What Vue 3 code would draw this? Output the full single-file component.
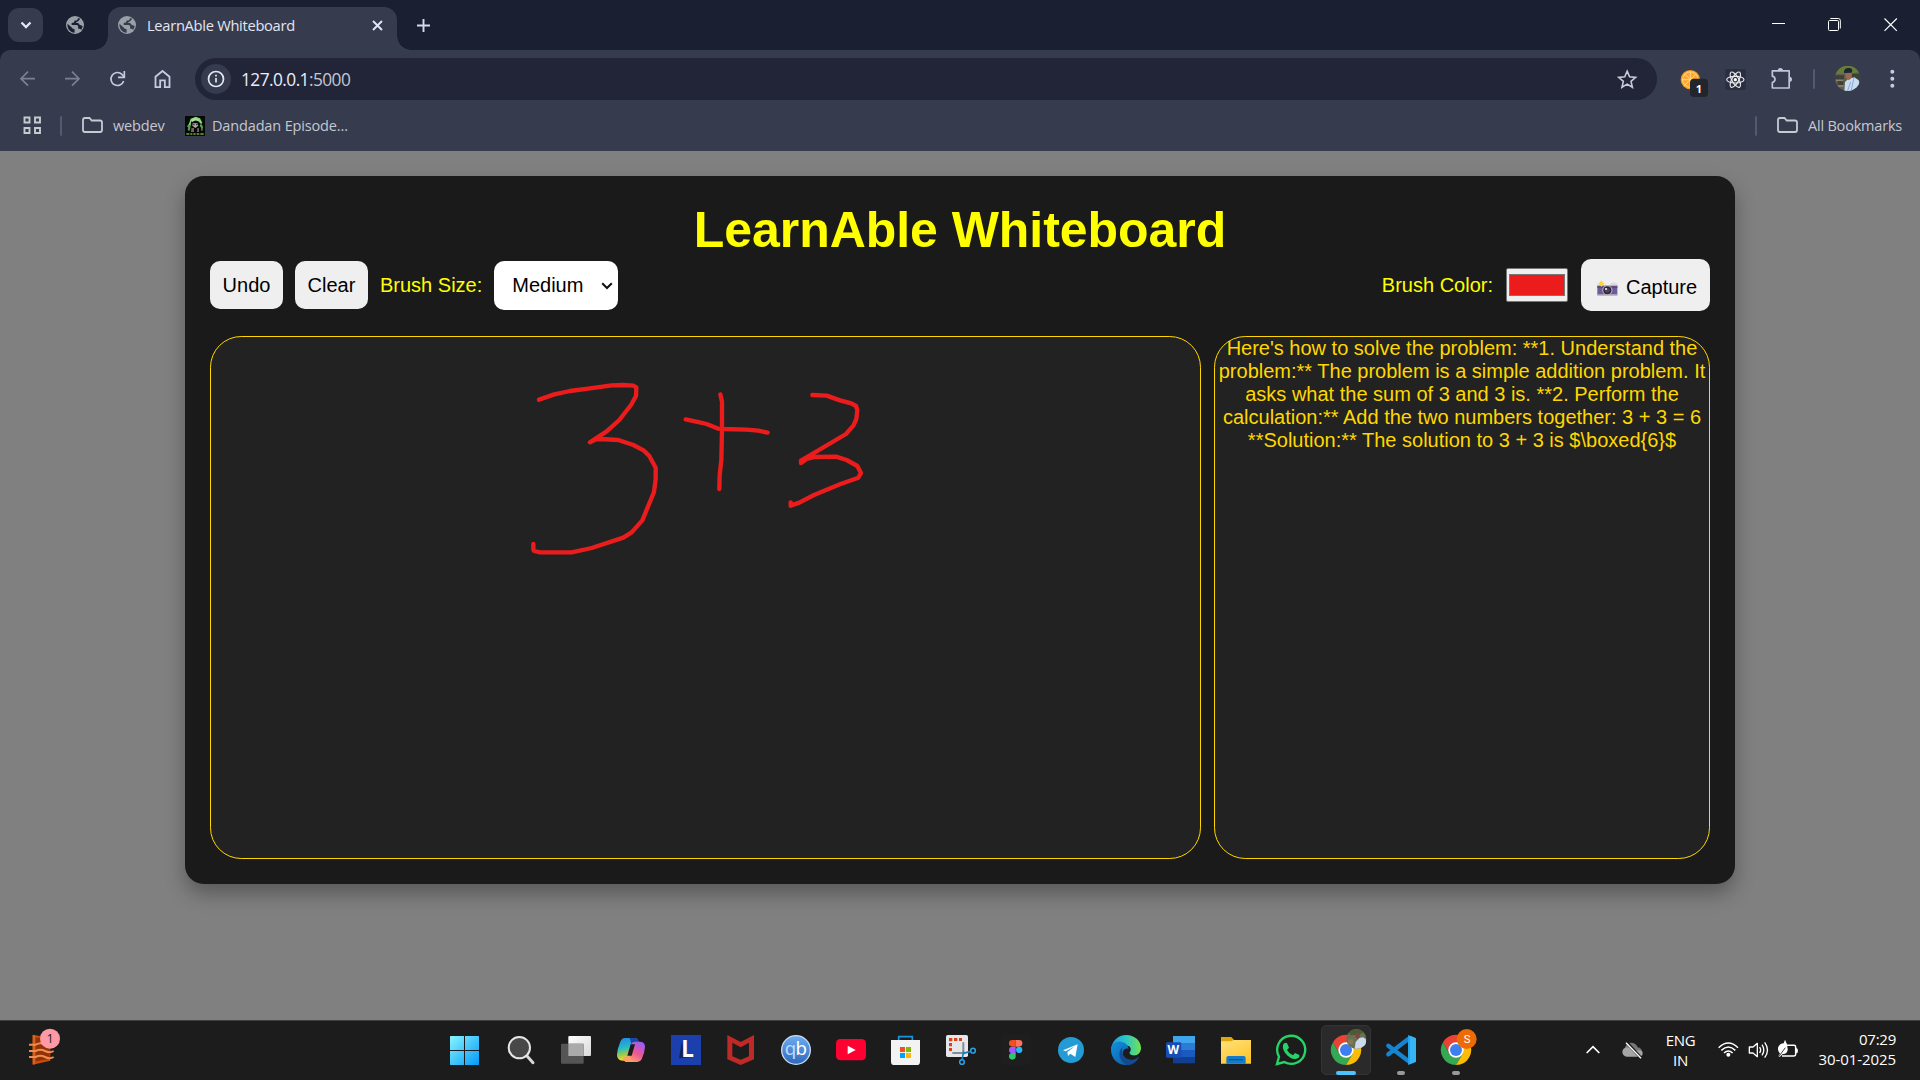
<script setup>
import { ref } from 'vue'

const brushSizes = ['Small', 'Medium', 'Large']
const brushSize = ref('Medium')
const solution =
  "Here's how to solve the problem: **1. Understand the problem:** The problem is a simple addition problem. It asks what the sum of 3 and 3 is. **2. Perform the calculation:** Add the two numbers together: 3 + 3 = 6 **Solution:** The solution to 3 + 3 is $\\boxed{6}$"
const strokes = [
  '87,119 133,103 180,93 240,85 305,76 340,75 370,77 379,82 378,108 363,135 328,180 290,214 240,247 258,238 272,237 325,240 370,255 402,272 418,288 437,323 437,357 432,396 397,481 365,517 340,533 245,564 185,577 90,577 72,573 70,568 70,552',
  '631,103 636,125 636,208 634,300 629,345 628,387',
  '527,178 555,184 590,192 625,206 640,207 710,209 745,212 773,218',
  '907,105 950,107 990,121 1024,130 1038,138 1042,150 1039,177 1030,197 1008,222 873,302 873,309 890,297 915,291 978,290 1010,300 1042,318 1053,339 1045,353 990,373 912,405 868,428 842,437 842,427',
]
</script>

<template>
  <div class="screen">
    <header class="tabstrip">
      <button class="tab-search">
        <svg viewBox="0 0 35 34"><path d="M13.500 14.500l4.500 4.500 4.500-4.500" fill="none" stroke="#e3e5f2" stroke-width="2.300" /></svg>
      </button>
      <div class="pinned">
        <svg class="globe" viewBox="0 0 24 24"><circle cx="12" cy="12" r="10.800" fill="#9aa0a6" /><path d="M3 10.500l5 4.500q1 2 3.500 2v4.300C6 21 2.500 16.500 3 10.500zM15.500 3.500c0 2-1 3.200-3 3.200h-1q0 3-3.500 3v2.200h6q1.800 0 1.800 2v2.500h1.500q1.400 0 2 1.500l2-4q-1-2-3.500-2l-2-2.400h-3l3.500-2.700 2-2.300z" fill="#1a1f31" /></svg>
      </div>
      <div class="tab">
        <svg class="globe" viewBox="0 0 24 24"><circle cx="12" cy="12" r="10.800" fill="#9aa0a6" /><path d="M3 10.500l5 4.500q1 2 3.500 2v4.300C6 21 2.500 16.500 3 10.500zM15.500 3.500c0 2-1 3.200-3 3.200h-1q0 3-3.500 3v2.200h6q1.800 0 1.800 2v2.500h1.500q1.400 0 2 1.500l2-4q-1-2-3.500-2l-2-2.400h-3l3.500-2.700 2-2.300z" fill="#363b4d" /></svg>
        <span class="tab-title">LearnAble Whiteboard</span>
        <svg class="tab-close" viewBox="0 0 11 11"><path d="M1 1l9 9M10 1l-9 9" stroke="#e3e5f2" stroke-width="1.900" /></svg>
      </div>
      <svg class="new-tab" viewBox="0 0 13 13"><path d="M6.500 0v13M0 6.500h13" stroke="#d8daec" stroke-width="1.900" /></svg>
      <div class="window-controls">
        <svg viewBox="582 3 141 141"><path d="M633 70.500h39" stroke="#fff" stroke-width="3" /></svg>
        <svg viewBox="750 3 141 141"><g fill="none" stroke="#fff" stroke-width="3"><rect x="802.500" y="61.500" width="30" height="30" rx="3" /><path d="M808 55.500h24q6 0 6 6v24" /></g></svg>
        <svg viewBox="923 3 141 141"><path d="M975.500 55.500l37 37M1012.500 55.500l-37 37" stroke="#fff" stroke-width="3.500" /></svg>
      </div>
    </header>

    <div class="browser-bars">
      <div class="toolbar">
        <svg class="tool" viewBox="15 174 135 126"><path d="M105 236H64M84 215l-21 21 21 21" fill="none" stroke="#7d8092" stroke-width="5" /></svg>
        <svg class="tool" viewBox="150 174 135 126"><path d="M195 236h41M216 215l21 21-21 21" fill="none" stroke="#7d8092" stroke-width="5" /></svg>
        <svg class="tool" viewBox="285 174 135 126"><path d="M371 243a19.500 19.500 0 1 1-5-20l7 8" fill="none" stroke="#c7cae0" stroke-width="5" /><path d="M373 213v19h-19" fill="none" stroke="#c7cae0" stroke-width="5" /></svg>
        <svg class="tool" viewBox="420 174 135 126"><path d="M466.500 261.500V230l21-17 21 17v31.500h-14V241h-14v20.500z" fill="none" stroke="#c7cae0" stroke-width="5.500" /></svg>
        <div class="omnibox">
          <svg class="info" viewBox="0 0 30 30"><circle cx="15" cy="15" r="15" fill="#373b4e" /><circle cx="15" cy="15" r="7.500" fill="none" stroke="#e3e5f2" stroke-width="1.700" /><path d="M15 14v4.500M15 10.700v1.800" stroke="#e3e5f2" stroke-width="1.700" /></svg>
          <span class="url">127.0.0.1<span class="port">:5000</span></span>
          <svg class="star" viewBox="172 207 60 60"><path d="M202.500 213.500l7.300 17 18 1.500-13.800 12 4.200 17.700-15.700-9.500-15.700 9.500 4.200-17.700-13.800-12 18-1.500z" fill="none" stroke="#c7cad6" stroke-width="4.800" /></svg>
        </div>
        <div class="extensions">
          <svg class="tool" viewBox="330 174 135 126">
            <circle cx="391" cy="239" r="29" fill="#f79a1c" /><circle cx="391" cy="239" r="25" fill="#ffd27a" /><circle cx="391" cy="239" r="22" fill="#ffa733" />
            <path d="M391 216v46M368 239h46M375 223l32 32M407 223l-32 32" stroke="#ffe0a0" stroke-width="2.500" />
            <rect x="390" y="236" width="54" height="55" rx="12" fill="#22252c" />
            <text x="417" y="280" text-anchor="middle" class="badge-number">1</text>
          </svg>
          <svg class="tool" viewBox="465 174 135 126"><rect x="496" y="207" width="61" height="62" rx="4" fill="#2a2e3e" /><g fill="none" stroke="#e8e8ea" stroke-width="3.500"><ellipse cx="526" cy="239" rx="26" ry="10" /><ellipse cx="526" cy="239" rx="26" ry="10" transform="rotate(60 526 239)" /><ellipse cx="526" cy="239" rx="26" ry="10" transform="rotate(120 526 239)" /></g><circle cx="526" cy="239" r="5" fill="#fff" /></svg>
          <svg class="tool" viewBox="600 174 135 126"><path d="M637 212.500h50.500V264H637v-16.500q8-2 8-9.500t-8-9.500z" fill="none" stroke="#c2c5dc" stroke-width="5" stroke-linejoin="round" /><path fill="#c2c5dc" d="M653 212q0-8 8-8t8 8zM688 230q8 0 8 8t-8 8z" /></svg>
          <i class="divider"></i>
          <svg class="tool" viewBox="795 174 135 126"><defs><clipPath id="face"><circle cx="863" cy="235" r="38" /></clipPath></defs><g clip-path="url(#face)"><path fill="#625e52" d="M824 197h77v77h-77z" /><path fill="#667d35" d="M824 197h77v19l-24 4-53 2z" /><path fill="#3c4138" d="M824 226h28v12h-28zM833 244h17v11h-17zM876 221h24v22h-24z" /><path fill="#89806e" d="M828 239h21v4h-21zM834 255h17v5h-17z" /><path d="M853 275l2-29 10-9 18-5 13 9 6 34z" fill="#c9ddf3" /><path d="M882 233l-9 41M872 246l-10 29" stroke="#8ba8cf" stroke-width="3" /><path fill="#9b6952" d="M857 211h18v22l-8 8-10-8z" /><path fill="#192637" d="M852 214q2-12 17-10 8 1 8 8l-2 6-23 1z" /></g></svg>
          <svg class="tool" viewBox="930 174 135 126"><g fill="#c7cae0"><circle cx="997" cy="215" r="6" /><circle cx="997" cy="236" r="6" /><circle cx="997" cy="257" r="6" /></g></svg>
        </div>
      </div>
      <div class="bookmarks">
        <svg class="grid-icon" viewBox="0 0 19 19"><path d="M1.500 1.500h5v5h-5zM12 1.500h5v5h-5zM1.500 12h5v5h-5zM12 12h5v5h-5z" fill="none" stroke="#c8cad2" stroke-width="1.900" /></svg>
        <i class="divider"></i>
        <svg class="folder" viewBox="0 0 21 17"><path d="M1 3q0-2 2-2h4.500l2.200 2.500H18q2 0 2 2V13q0 2-2 2H3q-2 0-2-2z" fill="none" stroke="#c8cad2" stroke-width="1.800" /></svg>
        <span class="mark webdev">webdev</span>
        <svg class="anime" viewBox="555 348 60 60"><path fill="#050a07" d="M555 348h60v60h-60z" /><path fill="#87db74" d="M566 374l6-18 15-6 13 5 7 13-4 4-8-8-14-4-8 6-1 12z" /><path fill="#5ba450" d="M566 372l6 8-4 14-5-5 2-6-4-4zM603 370l6 10-2 13-4-2 1-7-5-6z" /><path fill="#b7d6af" d="M575 361l6-6 12 1 4 7-9-3-11 6z" /><path fill="#b9aea2" d="M578 370h14l3 7-9 7-9-7z" /><path fill="#171c20" d="M579 373h5v3h-5zM588 373h5v3h-5z" /><path fill="#776061" d="M574 384h8v12h-9zM592 384h5v12h-6z" /><path d="M559 402h9M571 402h6M580 402h7M590 402h8M601 402h10" stroke="#7ba536" stroke-width="4" /></svg>
        <span class="mark episode">Dandadan Episode...</span>
        <span class="spacer"></span>
        <i class="divider"></i>
        <svg class="folder all" viewBox="0 0 21 17"><path d="M1 3q0-2 2-2h4.500l2.200 2.500H18q2 0 2 2V13q0 2-2 2H3q-2 0-2-2z" fill="none" stroke="#c8cad2" stroke-width="1.800" /></svg>
        <span class="mark all-label">All Bookmarks</span>
      </div>
    </div>

    <main class="page">
      <section class="card">
        <h1>LearnAble Whiteboard</h1>
        <div class="controls">
          <div class="group">
            <button class="btn">Undo</button>
            <button class="btn">Clear</button>
            <label>Brush Size:</label>
            <div class="select-wrap">
              <select v-model="brushSize"><option v-for="size in brushSizes" :key="size">{{ size }}</option></select>
              <svg viewBox="0 0 12 8"><path d="M1.200 1.200L6 6l4.800-4.800" fill="none" stroke="#111" stroke-width="2" /></svg>
            </div>
          </div>
          <div class="group right">
            <label>Brush Color:</label>
            <button class="color"><i></i></button>
            <button class="btn capture">
              <svg viewBox="710 121 63 48"><path fill="#ded9d4" d="M747 138l4-7q7-5 18-1l2 8z" /><path fill="#6a5d99" d="M711 136h60v31h-60z" /><path fill="#584982" d="M711 140h60v5h-60z" /><path fill="#b9b1ca" d="M711 136h60v3h-60zM711 164h60v3h-60z" /><circle cx="741" cy="152" r="15" fill="#bcb6b9" /><circle cx="741" cy="152" r="12" fill="#302838" /><circle cx="741" cy="152" r="7" fill="#51406d" /><circle cx="737" cy="148" r="3" fill="#fff" /><path fill="#ffd52d" d="M723 122l4 6 7 4-7 4-4 6-4-6-7-4 7-4z" /></svg>
              <span>Capture</span>
            </button>
          </div>
        </div>
        <div class="panels">
          <div class="panel board">
            <svg viewBox="211 337 989 521">
              <g transform="translate(510 360) scale(.333333)" fill="none" stroke="#ed1c1c" stroke-width="13" stroke-linecap="round" stroke-linejoin="round">
                <polyline v-for="points in strokes" :key="points" :points="points" />
              </g>
            </svg>
          </div>
          <div class="panel answer">{{ solution }}</div>
        </div>
      </section>
    </main>

    <footer class="taskbar">
      <div class="widget">
        <svg viewBox="84 52 99 117"><path fill="#c94d0b" d="M98 75l53 10v68l-53 12z" /><path fill="#8f3207" d="M107 84h42v64l-42 7z" /><path d="M101.500 76v88" stroke="#da6118" stroke-width="7" /><g fill="none" stroke="#f18c4d" stroke-width="6"><path d="M87 105h20q13-8 27-2h27" /><path d="M87 124h20q14-7 28 0t26 0" /><path d="M87 142h20q14-7 28 0t26 0" /></g><circle cx="150" cy="87" r="30" fill="#ff99a4" /><text x="150" y="101" text-anchor="middle" class="widget-number">1</text></svg>
      </div>
      <nav class="apps">
        <div class="app"><svg viewBox="63 60 90 90"><defs><linearGradient id="win" x1="60" y1="63" x2="147" y2="150" gradientUnits="userSpaceOnUse"><stop stop-color="#87f5ff" /><stop offset="1" stop-color="#0499f8" /></linearGradient></defs><path fill="url(#win)" d="M62 63h40v42H60V65q0-2 2-2zM105 63h40q2 0 2 2v40h-42zM60 108h42v42H62q-2 0-2-2zM105 108h42v40q0 2-2 2h-40z" /></svg></div>
        <div class="app"><svg viewBox="228 60 90 90"><path d="M289 121l20 22" stroke="#d5dade" stroke-width="9" stroke-linecap="round" /><circle cx="268" cy="98" r="32" fill="#484848" stroke="#e4e6e9" stroke-width="6" /></svg></div>
        <div class="app"><svg viewBox="393 60 90 90"><defs><linearGradient id="pane" x2="1" y2="1"><stop stop-color="#fff" /><stop offset="1" stop-color="#d9d9d9" /></linearGradient></defs><rect x="415" y="63" width="68" height="60" rx="3" fill="url(#pane)" /><rect x="393" y="86" width="68" height="60" rx="3" fill="#555" /><path d="M415 86h46v37h-46z" fill="#ababab" /></svg></div>
        <div class="app"><svg viewBox="558 60 90 90"><defs><linearGradient id="copA" x2=".2" y2="1"><stop stop-color="#2585e8" /><stop offset=".45" stop-color="#22b9cd" /><stop offset=".75" stop-color="#94cd4e" /><stop offset="1" stop-color="#ffd72d" /></linearGradient><linearGradient id="copB" x1=".8" x2=".2" y2="1"><stop stop-color="#9a5cff" /><stop offset=".5" stop-color="#ec5793" /><stop offset="1" stop-color="#ffae64" /></linearGradient></defs><path fill="url(#copA)" d="M583 69h31q8 0 11 9l3 9h-11q-9 0-12 9l-9 30q-4 11-14 11-22 0-21-18 1-18 10-39 5-11 12-11z" /><path fill="#1748ae" d="M599 69h15q8 0 11 9l3 9h-14q-6 0-8 7z" /><path fill="url(#copB)" d="M622 141h-31q-9 0-12-11 9-1 12-9l11-31q4-10 14-10h13q17 0 16 17-1 16-10 36-4 8-13 8z" /><path fill="#ff9f61" d="M579 130q9-1 12-9l3-9 12 29h-15q-9 0-12-11z" /><path fill="#1c1c1c" d="M602 88h13l-10 34h-13z" /></svg></div>
        <div class="app"><svg viewBox="723 60 90 90"><path fill="#1b40ae" d="M723 60h90v90h-90z" /><path fill="#13234e" d="M756 77l-9 53 42-4-28-9z" /><text x="754" y="126" class="letter-l">L</text></svg></div>
        <div class="app"><svg viewBox="888 60 90 90"><path fill="#bf2926" d="M892 60l40 21 40-21v73l-40 17-40-17zM907 83v41l25 10 25-10V83l-25 14z" fill-rule="evenodd" /></svg></div>
        <div class="app"><svg viewBox="1053 60 90 90"><defs><linearGradient id="qb" x2="0" y2="1"><stop stop-color="#6eacf2" /><stop offset="1" stop-color="#2e69ba" /></linearGradient></defs><circle cx="1098" cy="105" r="43" fill="url(#qb)" stroke="#c8ddf2" stroke-width="4" /><text x="1064" y="121" class="qb" textLength="67"><tspan fill="#bcdcff">q</tspan><tspan fill="#fff">b</tspan></text></svg></div>
        <div class="app"><svg viewBox="138 60 90 90"><rect x="138" y="72" width="90" height="64" rx="13" fill="#ff0033" /><path fill="#fff" d="M173 92l24 13-24 13z" /></svg></div>
        <div class="app"><svg viewBox="303 60 90 90"><path d="M326 80V65h41v15" fill="none" stroke="#1596df" stroke-width="5" /><path fill="#f3f3f3" d="M303 75h87v65q0 10-10 10h-67q-10 0-10-10z" /><path fill="#ef5026" d="M330 96h15v15h-15z" /><path fill="#80ba01" d="M348 96h15v15h-15z" /><path fill="#02a4ef" d="M330 114h15v15h-15z" /><path fill="#ffb902" d="M348 114h15v15h-15z" /></svg></div>
        <div class="app"><svg viewBox="468 60 90 90"><rect x="468" y="60" width="66" height="66" rx="5" fill="#e5e7ea" /><path d="M477 73.500h39M481.500 69v39" stroke="#da4215" stroke-width="9" stroke-dasharray="10 5" /><path d="M520 82v32h-33" fill="none" stroke="#858d94" stroke-width="6" /><path d="M516 134l5-25M521 115l20-6" stroke="#167dbb" stroke-width="5" /><g fill="none" stroke="#2ba1e2" stroke-width="4.500"><circle cx="516" cy="141" r="7" /><circle cx="549" cy="107" r="7" /></g></svg></div>
        <div class="app"><svg viewBox="633 60 90 90"><rect x="633" y="60" width="90" height="90" rx="5" fill="#1e1e1e" /><path fill="#f24e1e" d="M677 75v20h-10a10 10 0 0 1 0-20z" /><path fill="#ff7262" d="M677 75h10a10 10 0 0 1 0 20h-10z" /><path fill="#a259ff" d="M677 95v20h-10a10 10 0 0 1 0-20z" /><circle cx="687.500" cy="104.500" r="9.500" fill="#1abcfe" /><path fill="#2dc86e" d="M677 114v10a10 10 0 1 1-10-10z" /></svg></div>
        <div class="app"><svg viewBox="798 60 90 90"><circle cx="843" cy="105" r="39" fill="#249bd5" /><path fill="#fff" d="M819 106l44-18-7 38-15-10-7 7-2-12 23-17-28 15z" /></svg></div>
        <div class="app"><svg viewBox="963 60 90 90"><defs><linearGradient id="edgeTop" x2="1"><stop stop-color="#1a9fe0" /><stop offset=".5" stop-color="#2cc5c6" /><stop offset="1" stop-color="#72e34f" /></linearGradient><linearGradient id="edgeLow" x2="1" y2=".8"><stop stop-color="#1491db" /><stop offset="1" stop-color="#0b55a4" /></linearGradient></defs><path fill="url(#edgeTop)" d="M963 103c3-26 21-43 46-43 27 0 44 20 44 39 0 15-11 24-25 22-10-2-11-7-7-12 4-6 0-18-14-18-17-9-35-5-44 12z" /><path fill="url(#edgeLow)" d="M963 104c1-18 15-27 30-24 15 2 23 13 22 22-19-8-24 25-2 32 12 4 23 1 34-9-9 17-23 25-39 25-25 0-45-20-45-46z" /><path fill="#124b91" d="M998 96c-18 15-10 45 13 54 17-1 29-9 36-25-12 10-23 11-34 7-16-6-19-24-15-36z" /></svg></div>
        <div class="app"><svg viewBox="48 60 90 90"><path fill="#41a5ee" d="M69 63h66v21H69z" /><path fill="#2b7cd3" d="M69 84h66v21H69z" /><path fill="#185abd" d="M69 105h66v21H69z" /><path fill="#103f91" d="M69 126h66v19H69z" /><rect x="48" y="82" width="46" height="46" rx="4" fill="#174eb6" /><text x="70" y="118" text-anchor="middle" class="letter-w">W</text></svg></div>
        <div class="app"><svg viewBox="213 60 90 90"><defs><linearGradient id="fold" y2="1" x2=".6"><stop stop-color="#ffe27b" /><stop offset="1" stop-color="#ffc52f" /></linearGradient></defs><path fill="#e0a50d" d="M213 66h31l9 10h50v55h-90z" /><path fill="url(#fold)" d="M213 79h30l9-4h51v71h-90z" /><path fill="#137bc9" d="M229 146v-17q0-6 6-6h46q6 0 6 6v17z" /><path d="M238 134h39" stroke="#0b548d" stroke-width="4" stroke-linecap="round" /></svg></div>
        <div class="app"><svg viewBox="378 60 90 90"><path d="M381 147l6-22a42 42 0 1 1 16 16z" fill="none" stroke="#26d366" stroke-width="7" /><path fill="#26d366" d="M401 86q7-5 11 0l5 12-6 7q7 12 18 16l6-7 13 6q2 10-12 12c-21 0-45-30-35-46z" /></svg></div>
        <div class="app active"><svg viewBox="543 60 90 90"><path fill="#e94335" d="M549 82A45 45 0 0 1 627 82H588L568 116z" /><path fill="#34a853" d="M549 82A45 45 0 0 0 588 150L608 116 568 116z" /><path fill="#fbbc05" d="M627 82A45 45 0 0 1 588 150L608 116 588 82z" /><circle cx="588" cy="105" r="23" fill="#fff" /><circle cx="588" cy="105" r="18" fill="#3e7eee" /><circle cx="619" cy="72" r="30" fill="#6c7052" /><path fill="#4b5b32" d="M597 52q22-18 43 0l-13 7-27 2z" /><path d="M614 101l3-20 11-12 11-2 8 5q4 12-4 20-12 12-29 9z" fill="#ccdcec" /><path fill="#7d4545" d="M618 53h11v14l-6 6-7-7z" /><path d="M594 73h15v14h-15z" fill="#847a59" /></svg><i class="indicator"></i></div>
        <div class="app"><svg viewBox="708 60 90 90"><path d="M715 92l60 46M715 118l60-46" stroke="#1684cf" stroke-width="13" stroke-linecap="round" /><path fill="#25a4ec" d="M774 60l24 10v70l-24 10z" /><path fill="#35b5f5" d="M780 62l18 8v70l-18 8z" /></svg><i class="indicator"></i></div>
        <div class="app"><svg viewBox="873 60 90 90"><path fill="#e94335" d="M879 82A45 45 0 0 1 957 82H918L898 116z" /><path fill="#34a853" d="M879 82A45 45 0 0 0 918 150L938 116 898 116z" /><path fill="#fbbc05" d="M957 82A45 45 0 0 1 918 150L938 116 918 82z" /><circle cx="918" cy="105" r="23" fill="#fff" /><circle cx="918" cy="105" r="18" fill="#3e7eee" /><circle cx="950" cy="72" r="30" fill="#ee6a05" /><text x="951" y="84" text-anchor="middle" class="letter-s">S</text></svg><i class="indicator"></i></div>
      </nav>
      <div class="tray">
        <svg class="chevron" viewBox="78 88 42 33"><path d="M80 115l19-19 19 19" fill="none" stroke="#fff" stroke-width="5" /></svg>
        <svg class="cloud" viewBox="186 78 66 54"><path fill="#777" d="M194 104a20 20 0 0 1 39-7q12 2 13 13l-7 10-43-2z" /><path fill="#a5a5a5" d="M202 125a14 14 0 1 1 6-26l19 8q22-4 21 8 0 10-12 10z" /><path d="M200 82l43 47" stroke="#1c1c1c" stroke-width="9" /><path d="M198 83l45 47" stroke="#fff" stroke-width="4" /></svg>
        <div class="language"><span>ENG</span><span>IN</span></div>
        <svg class="wifi" viewBox="473 75 63 54"><g fill="none" stroke="#fff" stroke-width="4.500"><path d="M475 98q29-28 58 0" /><path d="M483 106q21-20 42 0" /><path d="M491 114q13-12 26 0" /></g><circle cx="504" cy="119" r="6" fill="#fff" /></svg>
        <svg class="sound" viewBox="562 75 65 60"><path d="M566 96h11l13-11v40l-13-11h-11z" fill="none" stroke="#fff" stroke-width="4" stroke-linejoin="round" /><path d="M597 96q6 9 0 18M604 89q11 16 0 32M612 82q17 23 0 46" fill="none" stroke="#fff" stroke-width="4" /></svg>
        <svg class="battery" viewBox="651 72 66 57"><path d="M678 91h24q5 0 5 5v22q0 5-5 5h-36" fill="none" stroke="#fff" stroke-width="4.500" /><path fill="#fff" d="M708 99q6 0 6 8t-6 8zM675 74q9 15 8 31-2 13-15 12l-9 9-4-3 5-7q-10-12-4-22 5-9 15-9z" /><path d="M657 124l19-26" stroke="#1c1c1c" stroke-width="2.500" /></svg>
        <div class="clock"><span class="time">07:29</span><span class="date">30-01-2025</span></div>
      </div>
    </footer>
  </div>
</template>

<style>
body { margin: 0; overflow: hidden; background: #808080; }
</style>

<style scoped>
.screen { width: 1920px; height: 1080px; display: flex; flex-direction: column; overflow: hidden; font-family: "Open Sans", "Noto Sans", sans-serif; background: #1a1f31; }
.screen svg { display: block; flex: none; overflow: visible; }
.screen button { border: 0; padding: 0; margin: 0; }
.tabstrip { height: 50px; flex: none; display: flex; }
.tab-search { width: 35px; height: 34px; margin: 8px 0 0 8px !important; border-radius: 11px; background: #363b4d; }
.tab-search svg { width: 35px; height: 34px; }
.pinned { width: 65px; height: 50px; display: flex; align-items: center; justify-content: center; }
.globe { width: 20px; height: 20px; }
.pinned .globe { margin-right: 1px; }
.tab { width: 289px; height: 43px; margin-top: 7px; box-sizing: border-box; padding: 0 14px 7px 9px; display: flex; align-items: center; background: #363b4d; border-radius: 13px 13px 0 0; position: relative; }
.tab::before, .tab::after { content: ""; position: absolute; bottom: 0; width: 14px; height: 14px; }
.tab::before { left: -14px; background: radial-gradient(circle at 0 0, transparent 13.5px, #363b4d 14px); }
.tab::after { right: -14px; background: radial-gradient(circle at 100% 0, transparent 13.5px, #363b4d 14px); }
.tab-title { margin-left: 10px; font-size: 14.700px; letter-spacing: -.3px; color: #e3e5f2; white-space: nowrap; }
.tab-close { width: 11px; height: 11px; margin-left: auto; }
.new-tab { width: 13px; height: 13px; margin: 19px 0 0 20px; }
.window-controls { margin-left: auto; display: flex; gap: 9px; padding: 1px 6px 0 0; }
.window-controls svg { width: 47px; height: 47px; }
.browser-bars { height: 101px; flex: none; background: #363b4d; border-radius: 10px 10px 0 0; }
.toolbar { height: 58px; padding: 8px 5px; box-sizing: border-box; display: flex; }
.tool { width: 45px; height: 42px; }
.omnibox { margin-left: 10px; width: 1462px; height: 42px; box-sizing: border-box; border-radius: 21px; background: #212537; display: flex; align-items: center; padding: 0 20px 0 6px; }
.info { width: 30px; height: 30px; }
.url { margin-left: 10px; font-size: 17.300px; letter-spacing: -.55px; color: #eceef8; }
.port { color: #c3c6d4; }
.star { width: 20px; height: 20px; margin-left: auto; }
.extensions { display: flex; margin-left: 13px; }
.extensions .divider { margin: 11px 10px 0 8px; }
.divider { width: 2px; height: 20px; background: #555970; border-radius: 1px; flex: none; }
.badge-number { font: 700 33px "Open Sans", sans-serif; fill: #fff; }
.bookmarks { height: 35px; display: flex; align-items: center; padding: 0 17px 0 23px; }
.grid-icon { width: 19px; height: 19px; }
.bookmarks .divider { margin-left: 18px; }
.folder { width: 21px; height: 17px; margin-left: 20px; }
.mark { font-size: 14.500px; color: #c5c8d2; white-space: nowrap; line-height: 20px; }
.webdev { margin-left: 10px; width: 72px; letter-spacing: -.15px; }
.anime { width: 20px; height: 20px; }
.episode { margin-left: 7px; letter-spacing: -.15px; }
.spacer { flex: 1; }
.all-label { margin-left: 10px; width: 95px; letter-spacing: -.2px; }
.page { flex: 1; background: #808080; padding-top: 25px; display: flex; justify-content: center; align-items: flex-start; font-family: "Liberation Sans", Arial, sans-serif; }
.card { width: 1550px; height: 708px; box-sizing: border-box; padding: 25px; border-radius: 18.750px; background: #1a1a1a; box-shadow: 0 10px 20px rgba(0, 0, 0, .3); display: flex; flex-direction: column; }
h1 { margin: 0; height: 58px; line-height: 58px; font-size: 50px; letter-spacing: -.05px; text-align: center; color: #ff0; }
.controls { height: 52px; display: flex; justify-content: space-between; align-items: center; color: #ff0; font-size: 20px; }
.group { display: flex; align-items: center; gap: 12px; }
.right { gap: 13px; }
.group label { line-height: 23px; }
.btn { font: 20px "Liberation Sans", Arial, sans-serif; color: #000; background: #efefef; border-radius: 10px; height: 48px; width: 73px; }
.select-wrap { position: relative; width: 124px; height: 49px; }
select { appearance: none; width: 124px; height: 49px; border: 0; padding: 0 0 0 18px; border-radius: 10px; background: #fff; color: #000; font: 20px "Liberation Sans", Arial, sans-serif; }
.select-wrap svg { position: absolute; right: 5px; top: 21px; width: 12px; height: 8px; }
.color { width: 62px; height: 34px; background: #efefef; border: 1px solid #767676 !important; border-radius: 2px; padding: 5px 2px !important; }
.color i { display: block; height: 22px; box-sizing: border-box; border: 1px solid #777; background: #ed1c1c; }
.capture { width: 129px; height: 52px; display: flex; align-items: center; padding-left: 15.500px !important; }
.capture svg { width: 21px; height: 16px; margin-top: 5px; }
.capture span { margin-left: 8.500px; padding-top: 4px; }
.panels { margin-top: 25px; height: 523px; display: flex; gap: 13px; }
.panel { box-sizing: border-box; height: 523px; border: 1px solid #ffd700; border-radius: 31.250px; background: #222; }
.board { width: 991px; }
.board svg { width: 989px; height: 521px; }
.answer { width: 496px; color: #ffd700; font-size: 20px; line-height: 23px; text-align: center; }
.taskbar { height: 60px; flex: none; box-sizing: border-box; border-top: 1px solid #404040; background: #1c1c1c; display: flex; }
.widget { width: 438.500px; box-sizing: border-box; padding: 6px 0 0 28px; }
.widget svg { width: 33px; height: 39px; }
.widget-number { font: 38px "Open Sans", sans-serif; fill: #272126; }
.apps { display: flex; width: 1045px; height: 59px; }
.app { width: 55px; height: 59px; position: relative; display: flex; justify-content: center; align-items: flex-start; padding-top: 14px; box-sizing: border-box; }
.app svg { width: 30px; height: 30px; position: relative; }
.active::before { content: ""; position: absolute; left: 2.500px; top: 4px; width: 50px; height: 50px; box-sizing: border-box; border: 1px solid #343434; border-radius: 5px; background: #2a2a2a; }
.indicator { position: absolute; bottom: 5px; width: 8px; height: 4px; border-radius: 2px; background: #999; }
.active .indicator { width: 20px; background: #4cc2ff; }
.letter-l { font: 700 67px "Open Sans", sans-serif; fill: #fff; }
.qb { font: 56px "Noto Sans", sans-serif; }
.letter-w { font: 700 36px "Open Sans", sans-serif; fill: #fff; }
.letter-s { font: 34px "Roboto", sans-serif; fill: #fff; }
.tray { flex: 1; display: flex; align-items: flex-start; color: #fff; font-size: 15px; line-height: 20px; }
.tray > svg { margin-top: 22px; }
.chevron { width: 14px; height: 11px; margin: 23px 0 0 102px !important; }
.cloud { width: 22px; height: 18px; margin-left: 22px; margin-top: 20px !important; }
.language { margin-left: 16px; width: 42px; padding-top: 9px; display: flex; flex-direction: column; align-items: center; letter-spacing: -.3px; }
.wifi { width: 21px; height: 18px; margin: 19px 0 0 16px !important; }
.sound { width: 21.670px; height: 20px; margin: 19px 0 0 9px !important; }
.battery { width: 22px; height: 19px; margin: 18px 0 0 8px !important; }
.clock { margin-left: auto; margin-right: 24px; padding-top: 8px; display: flex; flex-direction: column; align-items: flex-end; letter-spacing: -.25px; }
.date { letter-spacing: -.08px; }
</style>
